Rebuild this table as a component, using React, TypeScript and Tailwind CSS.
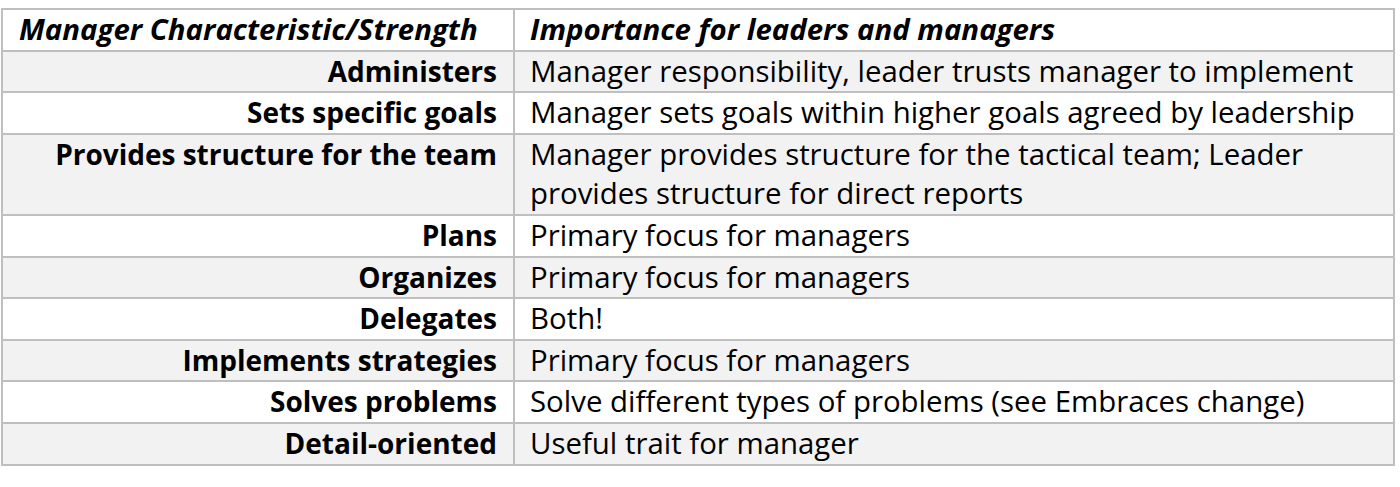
const rows: { k: string; v: string[]; shade: boolean }[] = [
  { k: 'Administers', v: ['Manager responsibility, leader trusts manager to implement'], shade: true },
  { k: 'Sets specific goals', v: ['Manager sets goals within higher goals agreed by leadership'], shade: false },
  {
    k: 'Provides structure for the team',
    v: ['Manager provides structure for the tactical team; Leader', 'provides structure for direct reports'],
    shade: true,
  },
  { k: 'Plans', v: ['Primary focus for managers'], shade: false },
  { k: 'Organizes', v: ['Primary focus for managers'], shade: true },
  { k: 'Delegates', v: ['Both!'], shade: false },
  { k: 'Implements strategies', v: ['Primary focus for managers'], shade: true },
  { k: 'Solves problems', v: ['Solve different types of problems (see Embraces change)'], shade: false },
  { k: 'Detail-oriented', v: ['Useful trait for manager'], shade: true },
];

export default function App() {
  return (
    <div className="w-[1400px] h-[487px] bg-white pt-2 pl-px">
      <table className="w-[1394px] border-collapse border-2 border-[#bfbfbf] text-black leading-[39.6px] font-['Open_Sans',sans-serif]">
        <colgroup>
          <col className="w-[512px]" />
          <col />
        </colgroup>
        <thead>
          <tr className="bg-white">
            <th className="border-2 border-[#bfbfbf] px-4 text-left text-[29.4px] font-bold italic">
              Manager Characteristic/Strength
            </th>
            <th className="border-2 border-[#bfbfbf] pl-[15px] pr-4 text-left text-[29.4px] font-bold italic">
              Importance for leaders and managers
            </th>
          </tr>
        </thead>
        <tbody>
          {rows.map((r) => (
            <tr key={r.k} className={r.shade ? 'bg-[#f2f2f2]' : 'bg-white'}>
              <td className="border-2 border-[#bfbfbf] px-4 text-right text-[28px] font-bold align-top">{r.k}</td>
              <td className="border-2 border-[#bfbfbf] pl-[15px] pr-4 text-left text-[29.4px] align-top">
                {r.v.map((line) => (
                  <div key={line}>{line}</div>
                ))}
              </td>
            </tr>
          ))}
        </tbody>
      </table>
    </div>
  );
}
